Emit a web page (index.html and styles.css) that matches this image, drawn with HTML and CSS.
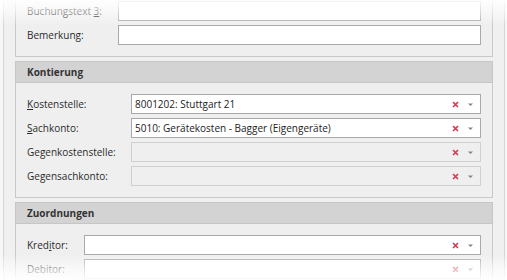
FILE: index.html
```html
<!DOCTYPE html>
<html lang="de">
<head>
<meta charset="utf-8">
<title>Buchung</title>
<link rel="stylesheet" href="styles.css">
</head>
<body>
<div class="frame">
  <section class="panel panel-top">
    <div class="form form-text">
      <label class="lbl">Buchungstext <u>3</u>:</label>
      <div class="field"></div>
      <label class="lbl">Bemerkung:</label>
      <div class="field"></div>
    </div>
  </section>

  <section class="group">
    <header class="group-head">Kontierung</header>
    <div class="panel">
      <div class="form form-konto">
        <label class="lbl"><u>K</u>ostenstelle:</label>
        <div class="field combo"><span class="val">8001202: Stuttgart 21</span>
          <svg class="clr" width="7" height="7" viewBox="0 0 7 7"><path d="M1 1L6 6M6 1L1 6"/></svg>
          <svg class="arr" width="7" height="5" viewBox="0 0 7 5"><path d="M0 0.5H7M1 1.5H6L3.5 4Z"/></svg>
        </div>
        <label class="lbl"><u>S</u>achkonto:</label>
        <div class="field combo"><span class="val">5010: Gerätekosten - Bagger (Eigengeräte)</span>
          <svg class="clr" width="7" height="7" viewBox="0 0 7 7"><path d="M1 1L6 6M6 1L1 6"/></svg>
          <svg class="arr" width="7" height="5" viewBox="0 0 7 5"><path d="M0 0.5H7M1 1.5H6L3.5 4Z"/></svg>
        </div>
        <label class="lbl">Gegenkostenstelle:</label>
        <div class="field combo disabled"><span class="val"></span>
          <svg class="clr" width="7" height="7" viewBox="0 0 7 7"><path d="M1 1L6 6M6 1L1 6"/></svg>
          <svg class="arr" width="7" height="5" viewBox="0 0 7 5"><path d="M0 0.5H7M1 1.5H6L3.5 4Z"/></svg>
        </div>
        <label class="lbl">Gegensachkonto:</label>
        <div class="field combo disabled"><span class="val"></span>
          <svg class="clr" width="7" height="7" viewBox="0 0 7 7"><path d="M1 1L6 6M6 1L1 6"/></svg>
          <svg class="arr" width="7" height="5" viewBox="0 0 7 5"><path d="M0 0.5H7M1 1.5H6L3.5 4Z"/></svg>
        </div>
      </div>
    </div>
  </section>

  <section class="group">
    <header class="group-head">Zuordnungen</header>
    <div class="panel">
      <div class="form form-zuord">
        <label class="lbl">Kred<u>i</u>tor:</label>
        <div class="field combo"><span class="val"></span>
          <svg class="clr" width="7" height="7" viewBox="0 0 7 7"><path d="M1 1L6 6M6 1L1 6"/></svg>
          <svg class="arr" width="7" height="5" viewBox="0 0 7 5"><path d="M0 0.5H7M1 1.5H6L3.5 4Z"/></svg>
        </div>
        <label class="lbl">Debitor:</label>
        <div class="field combo"><span class="val"></span>
          <svg class="clr" width="7" height="7" viewBox="0 0 7 7"><path d="M1 1L6 6M6 1L1 6"/></svg>
          <svg class="arr" width="7" height="5" viewBox="0 0 7 5"><path d="M0 0.5H7M1 1.5H6L3.5 4Z"/></svg>
        </div>
      </div>
    </div>
  </section>
</div>
<div class="fade"></div>
</body>
</html>
```

FILE: styles.css
```css
html, body {
  margin: 0;
  padding: 0;
  height: 280px;
  overflow: hidden;
}
body {
  background: #f7f7f7;
  font-family: "Open Sans", "Noto Sans", sans-serif;
  font-size: 10px;
  color: #2b2b2b;
  padding: 0 2px 0 3px;
}
.frame {
  background: #f0f0f0;
  border-left: 1px solid #d6d6d6;
  border-right: 1px solid #d6d6d6;
  padding: 0 11px;
  height: 300px;
  display: flex;
  flex-direction: column;
  gap: 4px;
}
.panel {
  background: #efefef;
  border: 1px solid #c9c9c9;
  border-top: none;
  padding: 11px;
}
.panel-top {
  margin-top: -10px;
  padding-top: 11px;
}
.group {
  display: flex;
  flex-direction: column;
}
.group-head {
  height: 20px;
  line-height: 20px;
  background: #d3d3d3;
  border: 1px solid #c6c6c6;
  padding-left: 11px;
  font-weight: bold;
  color: #333;
}
.form {
  display: grid;
  row-gap: 4px;
  align-items: center;
}
.form-text { grid-template-columns: 91px 1fr; }
.form-konto { grid-template-columns: 104px 1fr; }
.form-zuord { grid-template-columns: 57px 1fr; }
.lbl {
  white-space: nowrap;
}
.lbl u {
  text-decoration-thickness: 1px;
  text-underline-offset: 1px;
}
.field {
  height: 18px;
  background: #fff;
  border: 1px solid #a9a9a9;
  display: flex;
  align-items: center;
  padding: 0 6px 0 3px;
  color: #222;
}
.field.disabled {
  background: #efefef;
  border-color: #cfcfcf;
}
.val {
  flex: 1;
  white-space: nowrap;
  overflow: hidden;
}
.clr {
  fill: none;
  stroke: #d23a4c;
  stroke-width: 1.6;
  margin-right: 8px;
}
.arr {
  fill: #858585;
  stroke: none;
}
.fade {
  position: fixed;
  inset: 0;
  pointer-events: none;
  background:
    linear-gradient(to bottom, rgba(255,255,255,0.9) 0, rgba(255,255,255,0.55) 12px, rgba(255,255,255,0) 26px),
    linear-gradient(to top, rgba(255,255,255,0.95) 0, rgba(255,255,255,0.6) 12px, rgba(255,255,255,0) 26px);
}
```
